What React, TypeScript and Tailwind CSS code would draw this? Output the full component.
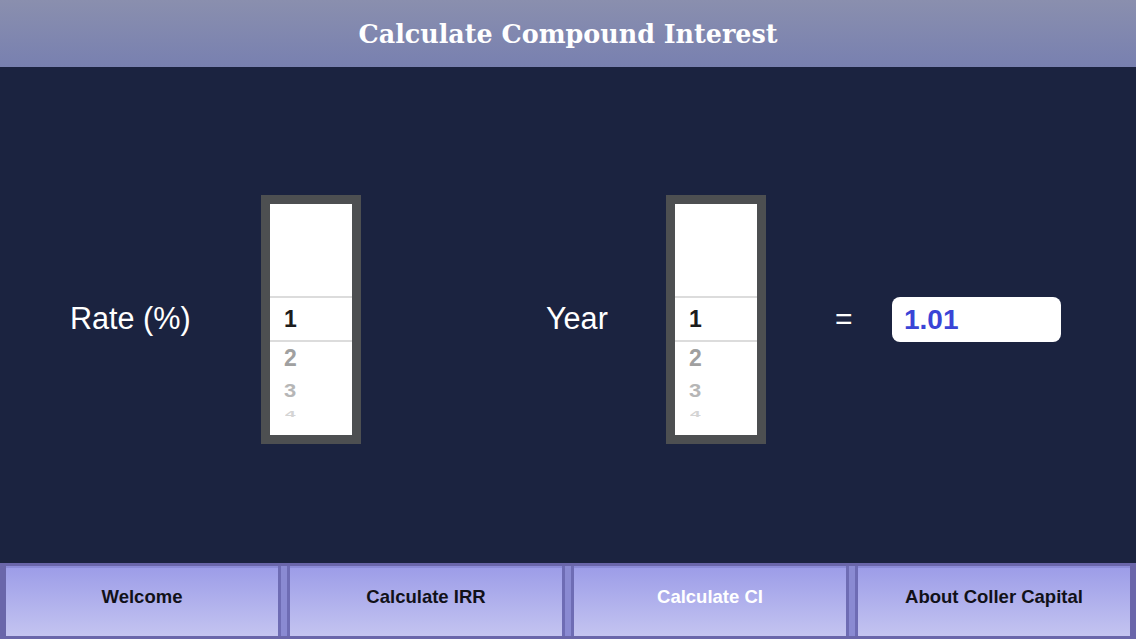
import React from "react";

// Compound interest screen: title bar, two wheel pickers, result box, tab bar.

const TABS = [
  { label: "Welcome", active: false },
  { label: "Calculate IRR", active: false },
  { label: "Calculate CI", active: true },
  { label: "About Coller Capital", active: false },
];

function Picker() {
  return (
    <div className="w-[100px] h-[249px] bg-[#4d4f51] p-[9px] shrink-0">
      <div className="h-full bg-white flex flex-col font-['Liberation_Sans',Arial,sans-serif] font-bold">
        <div className="h-[94px] border-b-2 border-[#dcdcdc]" />
        <div className="h-[42px] flex items-center pl-[14px] text-[23px] text-[#1c1c1c]">1</div>
        <div className="border-t-2 border-[#dcdcdc]" />
        <div className="h-[32px] flex items-center pl-[14px] text-[23px] text-[#a0a0a0]">2</div>
        <div className="h-[32px] flex items-center pl-[14px] text-[22px] text-[#b6b6b6] scale-y-[0.85] origin-left">3</div>
        <div className="h-[16px] flex items-center pl-[15px] text-[19px] text-[#d4d4d4] scale-y-[0.45] origin-left">4</div>
      </div>
    </div>
  );
}

export default function App() {
  return (
    <div className="w-[1136px] h-[639px] flex flex-col bg-[#1b2340] overflow-hidden">
      <header className="h-[67px] shrink-0 flex items-center justify-center bg-gradient-to-b from-[#8a8fae] to-[#7880b0]">
        <h1 className="text-white text-[25.4px] font-bold font-['DejaVu_Serif',Georgia,serif] pt-[1px]">
          Calculate Compound Interest
        </h1>
      </header>

      <main className="flex-1 flex items-center pt-[9px] pl-[70px] text-white font-['Liberation_Sans',Arial,sans-serif]">
        <div className="w-[191px] text-[30.6px] leading-none pb-[2px]">Rate (%)</div>
        <Picker />
        <div className="w-[185px]" />
        <div className="w-[120px] text-[30.6px] leading-none pb-[2px]">Year</div>
        <Picker />
        <div className="ml-[69px] w-[23px] text-[30px] leading-none pb-[2px]">=</div>
        <div className="ml-[34px] w-[169px] h-[45px] bg-white rounded-[8px] flex items-center pl-[12px]">
          <span className="text-[#3a44d6] text-[28px] font-bold leading-none">1.01</span>
        </div>
      </main>

      <nav className="h-[76px] shrink-0 bg-[#6a66aa] flex px-[6px] pt-[3px] pb-[3px] font-['Liberation_Sans',Arial,sans-serif]">
        {TABS.map((t, i) => (
          <React.Fragment key={t.label}>
            {i > 0 && <div className="w-[12px] bg-[#8a8ad2] border-x-[3px] border-[#6e6cb4]" />}
            <div
              className={`flex-1 flex items-center justify-center pb-[10px] bg-gradient-to-b from-[#9d9de8] to-[#c4c4f0] border-t-2 border-[#8c8cd8] text-[18.5px] font-bold ${
                t.active ? "text-white" : "text-[#111118]"
              }`}
            >
              {t.label}
            </div>
          </React.Fragment>
        ))}
      </nav>
    </div>
  );
}
